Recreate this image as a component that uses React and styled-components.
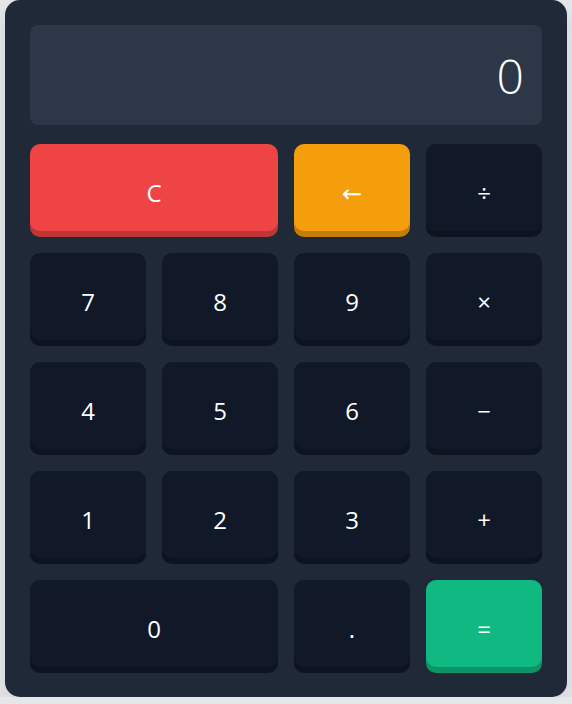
import React, { useState } from 'react'
import styled, { createGlobalStyle, css } from 'styled-components'

const GlobalStyle = createGlobalStyle`
  body {
    margin: 0;
    background: #e5e7eb;
    font-family: "Open Sans", "Noto Sans", "DejaVu Sans", sans-serif;
  }
`

const Page = styled.div`
  padding: 0 5px;
`

const Card = styled.div`
  background: #1f2937;
  border-radius: 15px;
  padding: 25px 25px 24px;
  box-shadow: 0 10px 25px rgba(0, 0, 0, 0.1);
`

const Display = styled.div`
  height: 100px;
  margin-bottom: 19px;
  padding: 0 18px 0 20px;
  display: flex;
  align-items: center;
  justify-content: flex-end;
  background: #2d3748;
  border-radius: 8px;
  color: #fff;
  font-size: 48px;
  font-weight: 300;
  overflow: hidden;
`

const Keypad = styled.div`
  display: grid;
  grid-template-columns: repeat(4, 1fr);
  grid-auto-rows: 93px;
  gap: 16px;
`

const colors = {
  clear: '#ef4444',
  back: '#f59e0b',
  equals: '#10b981',
  plain: '#111827',
}

const Key = styled.button`
  border: none;
  outline: none;
  border-radius: 10px;
  background: ${(p) => colors[p.$kind || 'plain']};
  color: #fff;
  font-family: inherit;
  font-size: 24px;
  cursor: pointer;
  box-shadow: inset 0 -6px 0 rgba(0, 0, 0, 0.2);
  padding: 3px 0 0;
  ${(p) =>
    p.$wide &&
    css`
      grid-column: span 2;
    `}
`

const keys = [
  { label: 'C', kind: 'clear', wide: true },
  { label: '←', kind: 'back' },
  { label: '÷', op: '/' },
  { label: '7' },
  { label: '8' },
  { label: '9' },
  { label: '×', op: '*' },
  { label: '4' },
  { label: '5' },
  { label: '6' },
  { label: '−', op: '-' },
  { label: '1' },
  { label: '2' },
  { label: '3' },
  { label: '+', op: '+' },
  { label: '0', wide: true },
  { label: '.' },
  { label: '=', kind: 'equals' },
]

export default function App() {
  const [expr, setExpr] = useState('')

  const press = (key) => {
    if (key.kind === 'clear') return setExpr('')
    if (key.kind === 'back') return setExpr((e) => e.slice(0, -1))
    if (key.kind === 'equals') {
      try {
        // eslint-disable-next-line no-new-func
        const result = Function(`return (${expr || 0})`)()
        setExpr(String(result))
      } catch (e) {
        setExpr('')
      }
      return
    }
    setExpr((e) => e + (key.op || key.label))
  }

  const shown = expr.replace(/\//g, '÷').replace(/\*/g, '×').replace(/-/g, '−')

  return (
    <>
      <GlobalStyle />
      <Page>
        <Card>
          <Display>{shown || '0'}</Display>
          <Keypad>
            {keys.map((k) => (
              <Key key={k.label} $kind={k.kind} $wide={k.wide} onClick={() => press(k)}>
                {k.label}
              </Key>
            ))}
          </Keypad>
        </Card>
      </Page>
    </>
  )
}
